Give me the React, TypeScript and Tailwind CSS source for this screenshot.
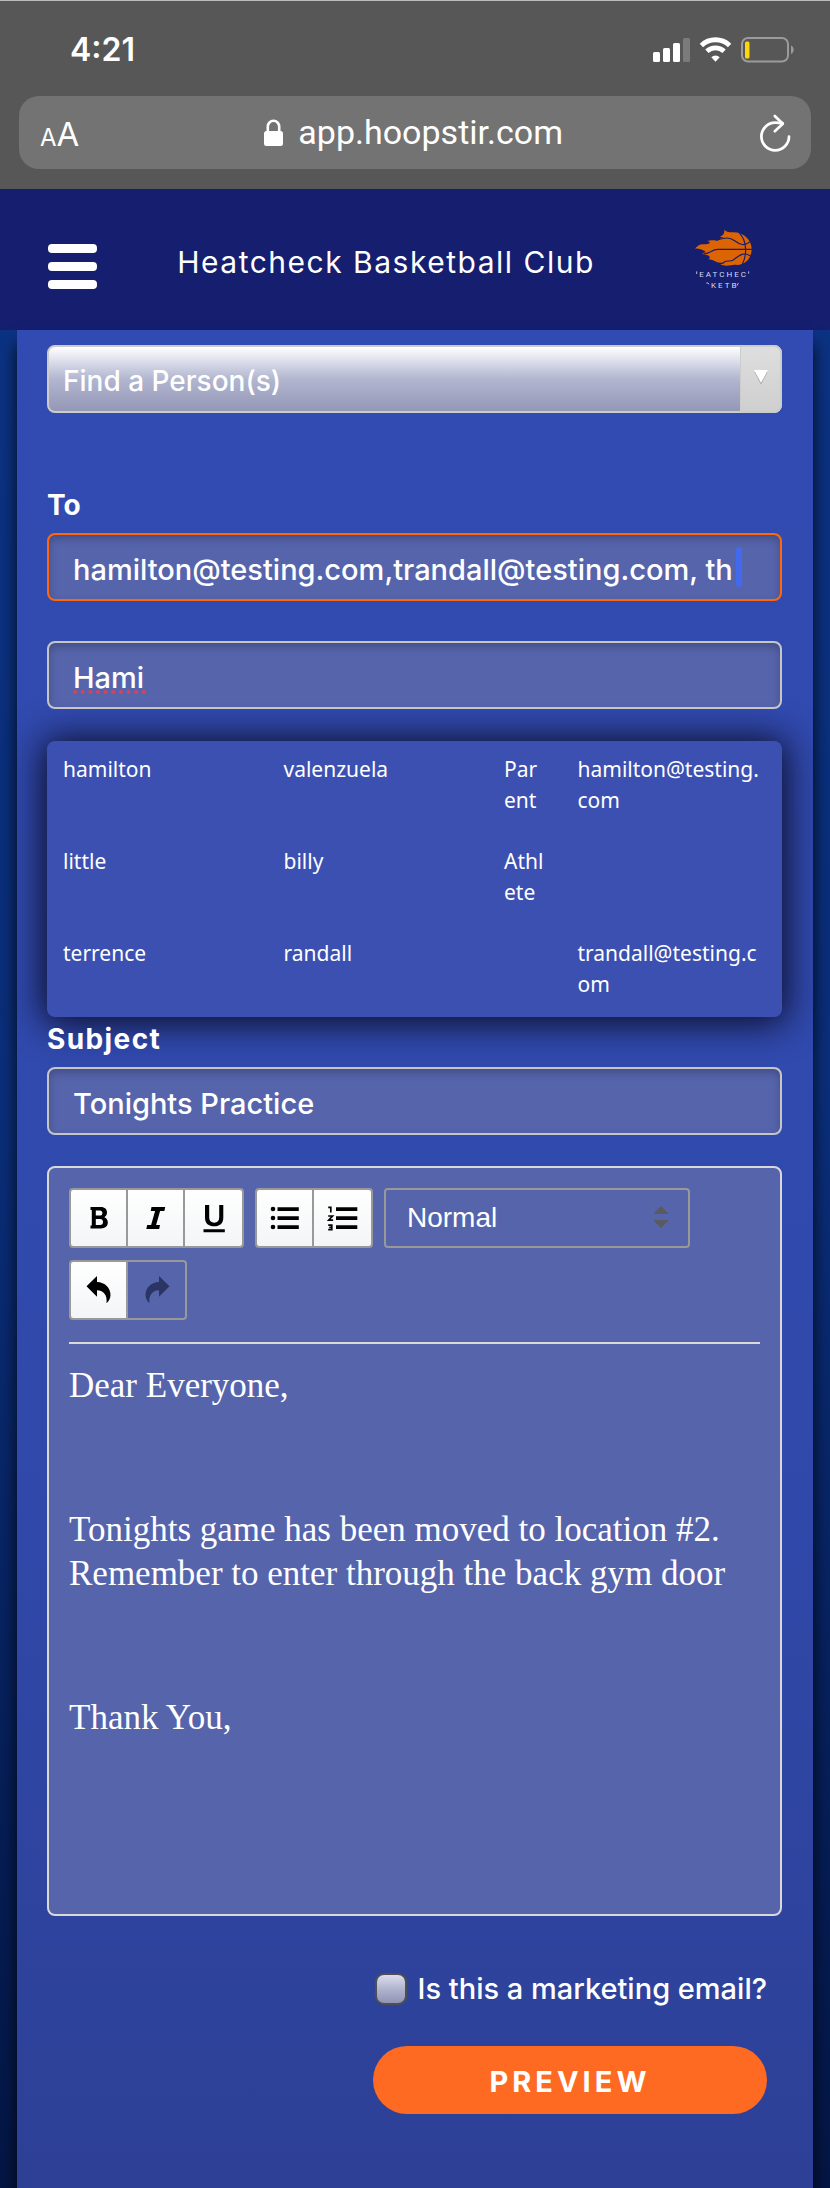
import React from "react";

const people = [
  { first: "hamilton", last: "valenzuela", role: "Parent", email: "hamilton@testing.com" },
  { first: "little", last: "billy", role: "Athlete", email: "" },
  { first: "terrence", last: "randall", role: "", email: "trandall@testing.com" },
];

const fieldClass =
  "block h-[68px] w-full rounded-lg border-2 bg-[#5664ac] px-6 pt-1 text-[29px] font-medium text-white outline-none shadow-[inset_0_4px_8px_rgba(0,0,0,0.22)]";

function StatusIcons() {
  return (
    <svg width="142" height="26" viewBox="0 0 142 26" aria-hidden="true">
      <g fill="#fff">
        <rect x="0" y="15" width="7" height="10" rx="1.5" />
        <rect x="10" y="11" width="7" height="14" rx="1.5" />
        <rect x="20" y="6" width="7" height="19" rx="1.5" />
        <rect x="30" y="1" width="7" height="24" rx="1.5" fill="#7b7b7b" />
      </g>
      <g fill="none" stroke="#fff" strokeWidth="4.8">
        <path d="M48.4 8.400a20.400 20.400 0 0 1 28.200 0" />
        <path d="M53.900 14.300a12.600 12.600 0 0 1 17.200 0" />
      </g>
      <path d="M62.500 24.800 58.300 20.200a6.200 6.200 0 0 1 8.400 0z" fill="#fff" />
      <rect x="89" y="1" width="46" height="23.500" rx="6" fill="none" stroke="#9b9b9b" strokeWidth="2" />
      <rect x="92" y="4.500" width="4.500" height="17" rx="1.500" fill="#fdd60a" />
      <path d="M138 8.500c3.600 1.500 3.600 7 0 8.500z" fill="#9b9b9b" />
    </svg>
  );
}

function BrowserChrome() {
  return (
    <div className="border-t border-[#b9bdbd] bg-[#575757] px-[19px] pb-5 text-white">
      <div className="flex h-[95px] items-center justify-between pt-[3px] pr-4 pl-[51px]">
        <span className="text-[32px] font-semibold">4:21</span>
        <StatusIcons />
      </div>
      <div className="flex h-[73px] items-center justify-between rounded-[20px] bg-[#737373] pr-5 pl-[21px]">
        <button type="button" aria-label="Text size" className="flex items-baseline pt-1">
          <span className="text-[24px]">A</span>
          <span className="text-[33px]">A</span>
        </button>
        <div className="flex items-center gap-[15px]">
          <svg width="19" height="28" viewBox="0 0 19 28" aria-hidden="true">
            <rect x="0" y="12" width="19" height="15" rx="2.500" fill="#fff" />
            <path d="M3.800 13V7.500a5.700 5.700 0 0 1 11.400 0V13" fill="none" stroke="#fff" strokeWidth="2.600" />
          </svg>
          <span className="pr-3 font-['Roboto',sans-serif] text-[34px]">app.hoopstir.com</span>
        </div>
        <button type="button" aria-label="Reload">
          <svg width="31" height="38" viewBox="0 0 31 38" fill="none" stroke="#fff" strokeWidth="2.700" strokeLinecap="round" strokeLinejoin="round">
            <path d="M29 22.500A13.800 13.800 0 1 1 15.300 8.700l7.200.5" />
            <path d="M14.800 2l8 7.700-8 7.500" />
          </svg>
        </button>
      </div>
    </div>
  );
}

function ClubLogo() {
  return (
    <svg width="62" height="62" viewBox="61 57 186 186" role="img" aria-label="Heatcheck Basketball logo">
      <path
        d="M160 58c5 8 13 9 27 9 34 0 56 24 56 51 0 26-18 46-44 47-10-2-20 2-31 2-8 0-13-1-19-4 8-1 13-3 14-7-10 3-20 3-27-1-8-4-15-6-23-7 5-3 5-7 2-10-8-5-14-5-21-6 5-3 8-5 10-8-10-5-20-9-32-8 8-7 14-13 24-13 8 0 15 1 20-3 3-4-1-6-7-7 15-5 26 0 34-4 6-3 13-5 17-5-5-3-9-3-13-3 9-4 17-12 13-23z"
        fill="#dc6403"
      />
      <g fill="none" stroke="#161e70" strokeWidth="3.500" strokeLinecap="round">
        <path d="M100 130c16 3 22-12 42-12h101" />
        <path d="M137 91c24-7 37-12 55 1 16 12 30 18 46 3" />
        <path d="M241 139c-25-17-39 1-53 11-9 5-17 1-27 5" />
        <path d="M207 70c21 22 23 64 8 93" />
      </g>
      <g fill="#d9dcf0" fontFamily="Roboto, sans-serif" fontSize="24" letterSpacing="6">
        <text x="86" y="201">EATCHEC</text>
        <text x="121" y="235">KETB</text>
      </g>
      <path d="M78 184v8M234 184v7M107 219l5 0 3 4M203 219l-4 8" fill="none" stroke="#d9dcf0" strokeWidth="2.500" />
    </svg>
  );
}

function SiteHeader() {
  return (
    <header className="flex h-[141px] items-center justify-between bg-[#161e70] pr-[77px] pl-12 text-white">
      <button type="button" aria-label="Menu" className="mt-[14px] flex w-[49px] flex-col gap-[9px]">
        <span className="h-[9px] rounded-sm bg-white" />
        <span className="h-[9px] rounded-sm bg-white" />
        <span className="h-[9px] rounded-sm bg-white" />
      </button>
      <h1 className="mt-[6px] pr-4 text-[30px] tracking-wider">Heatcheck Basketball Club</h1>
      <ClubLogo />
    </header>
  );
}

function ToolButton({ label, disabled, children }: { label: string; disabled?: boolean; children: React.ReactNode }) {
  return (
    <button
      type="button"
      aria-label={label}
      disabled={disabled}
      className="flex h-14 w-[57px] items-center justify-center bg-linear-to-b from-white to-[#f3f5f7] text-black disabled:bg-none disabled:text-[#2b3563]"
    >
      <svg width="32" height="32" viewBox="0 0 32 32" fill="currentColor" aria-hidden="true">
        {children}
      </svg>
    </button>
  );
}

function ToolGroup({ children }: { children: React.ReactNode }) {
  return (
    <div className="flex divide-x-2 divide-[#999] overflow-hidden rounded border-2 border-[#999]">{children}</div>
  );
}

function Toolbar() {
  return (
    <div className="flex flex-wrap gap-x-[11px] gap-y-3 border-b-2 border-[#d9d9d9] pb-[22px]">
      <ToolGroup>
        <ToolButton label="Bold">
          <path fillRule="evenodd" d="M7.500 5h10.200c4.300 0 6.300 2.400 6.300 5.600 0 2.200-1 3.800-2.700 4.600 2.200.8 3.500 2.700 3.500 5.100 0 4-2.700 6.200-7 6.200H7.500v-3h1.300V8H7.500zm5.300 3.400v5.200h4c1.700 0 2.600-1 2.600-2.600s-.9-2.600-2.600-2.600zm0 8.500V23h4.300c1.900 0 2.900-1.100 2.900-3s-1-3.100-2.900-3.100z" />
        </ToolButton>
        <ToolButton label="Italic">
          <path d="M11.500 5h13.700l-.8 3.900h-4.300l-4 14h3.900L19.200 27H6.300l.9-4.100h3.900l4-14h-4.400z" />
        </ToolButton>
        <ToolButton label="Underline">
          <path d="M7 3h4.200v12.500c0 3.400 1.800 5.200 5 5.200s5-1.800 5-5.200V3h4.100v12.700c0 5.600-3.500 8.600-9.100 8.600S7 21.300 7 15.700zM5.500 27.300h21.300v3H5.500z" />
        </ToolButton>
      </ToolGroup>
      <ToolGroup>
        <ToolButton label="Bulleted list">
          <circle cx="4" cy="7" r="2.300" />
          <circle cx="4" cy="16" r="2.300" />
          <circle cx="4" cy="25" r="2.300" />
          <path d="M8.500 5.300h21.300v3.600H8.500zM8.500 14.300h21.300v3.600H8.500zM8.500 23.300h21.300v3.600H8.500z" />
        </ToolButton>
        <ToolButton label="Numbered list">
          <path d="M9 5.300h21.300v3.600H9zM9 14.300h21.300v3.600H9zM9 23.300h21.300v3.600H9z" />
          <path d="M1.200 5.400h2.600v5M1.200 14h4.300L1.700 18.200h4.400M1.200 23.200h3.600v4.500H1.200M2.200 25.400h2.600" fill="none" stroke="currentColor" strokeWidth="1.700" />
        </ToolButton>
      </ToolGroup>
      <div className="relative w-[306px]">
        <select
          aria-label="Paragraph style"
          className="h-[60px] w-full appearance-none rounded border-2 border-[#999] bg-transparent px-[21px] font-['Liberation_Sans',sans-serif] text-[28px] text-white"
        >
          <option>Normal</option>
        </select>
        <svg className="pointer-events-none absolute top-[18px] right-5" width="18" height="23" viewBox="0 0 18 23" fill="#5b5b5f" aria-hidden="true">
          <path d="M1 8 9 0l8 8zM1 14h16l-8 8z" />
        </svg>
      </div>
      <ToolGroup>
        <ToolButton label="Undo">
          <path d="M3.500 12.300 14 2v6c8 .3 13.500 5.800 13.500 12.800 0 3.300-1.500 6.300-4 8.500 1-7.500-2.500-13-9.500-13v6.500z" />
        </ToolButton>
        <ToolButton label="Redo" disabled>
          <path d="M28.500 12.300 18 2v6C10 8.300 4.500 13.800 4.500 20.800c0 3.300 1.500 6.300 4 8.500-1-7.500 2.500-13 9.500-13v6.500z" />
        </ToolButton>
      </ToolGroup>
    </div>
  );
}

export default function App() {
  return (
    <div className="flex min-h-screen flex-col bg-linear-to-b from-[#0c3486] via-[#0b2f7c] via-50% to-[#041645] font-['Inter',sans-serif]">
      <BrowserChrome />
      <SiteHeader />
      <main className="mx-[17px] flex-1 bg-linear-to-b from-[#324bb2] via-[#3049ab] via-60% to-[#2d4096] pt-[15px] pr-[31px] pl-[30px] text-white shadow-[0_14px_16px_rgba(0,0,0,0.8)]">
        <form onSubmit={(e) => e.preventDefault()}>
          <div className="relative">
            <select
              aria-label="Find a Person(s)"
              className="block h-[68px] w-full appearance-none rounded-lg border-2 border-[#ccc] bg-linear-to-b from-white via-[#b2b6d0] via-50% to-[#9497b6] pt-1 pr-12 pl-[14px] text-[28px] font-medium text-white"
            >
              <option>Find a Person(s)</option>
            </select>
            <span className="pointer-events-none absolute inset-y-0 right-0 flex w-[42px] justify-center rounded-r-lg border-2 border-l border-[#ccc] bg-linear-to-b from-[#dedede] to-[#cfcfcf] pt-[23px]">
              <svg width="16" height="15" viewBox="0 0 16 15" aria-hidden="true">
                <path d="M1.500 2h13L8 14.500z" fill="#999" />
                <path d="M1 0h14L8 13z" fill="#fff" />
              </svg>
            </span>
          </div>

          <label htmlFor="to" className="mt-[74px] block text-[28px] leading-9 font-bold">
            To
          </label>
          <div className="relative mt-[10px]">
            <input id="to" type="text" defaultValue="hamilton@testing.com,trandall@testing.com, th" className={`${fieldClass} border-[#ff660d]`} />
            <span className="absolute top-[14px] right-10 h-10 w-[6px] rounded-full bg-[#436aee]" />
          </div>

          <div className="relative mt-10">
            <input aria-label="Search people" type="text" spellCheck={false} defaultValue="Hami" className={`${fieldClass} border-[#c6c6c6]`} />
            <span className="absolute top-[49px] left-[26px] w-[73px] border-b-4 border-dotted border-[#d9435a]" />
          </div>

          <table className="mt-8 w-full table-fixed rounded-lg bg-[#3c50b1] font-['Noto_Sans',sans-serif] text-[21px] leading-[31px] shadow-[0_2px_36px_4px_rgba(8,8,30,0.95)]">
            <colgroup>
              <col className="w-[30%]" />
              <col className="w-[30%]" />
              <col className="w-[10%]" />
              <col className="w-[30%]" />
            </colgroup>
            <tbody>
              {people.map((p) => (
                <tr key={p.first} className="h-[92px] align-top">
                  <td className="px-4 pt-[13px]">{p.first}</td>
                  <td className="px-4 pt-[13px]">{p.last}</td>
                  <td className="px-4 pt-[13px] break-all">{p.role}</td>
                  <td className="px-4 pt-[13px] break-all">{p.email}</td>
                </tr>
              ))}
            </tbody>
          </table>

          <label htmlFor="subject" className="mt-1 block text-[28px] leading-9 font-bold tracking-wider">
            Subject
          </label>
          <input id="subject" type="text" defaultValue="Tonights Practice" className={`${fieldClass} mt-[10px] border-[#c6c6c6]`} />

          <div className="mt-[31px] rounded-lg border-2 border-[#d9d9d9] bg-[#5664ac] px-5 pt-5">
            <Toolbar />
            <div
              role="textbox"
              aria-label="Message"
              aria-multiline="true"
              contentEditable
              suppressContentEditableWarning
              className="min-h-[570px] pt-5 font-['Liberation_Serif',serif] text-[35px] leading-[44px] outline-none"
            >
              <p>Dear Everyone,</p>
              <p className="mt-[100px]">Tonights game has been moved to location #2. Remember to enter through the back gym door</p>
              <p className="mt-[100px]">Thank You,</p>
            </div>
          </div>

          <div className="mt-[55px] mr-[15px] flex flex-col items-end pb-[72px]">
            <label className="flex items-center gap-[11px] text-[29px] leading-9 font-medium">
              <input
                type="checkbox"
                className="size-8 appearance-none rounded-[9px] border-2 border-[#505050] bg-linear-to-b from-[#dcdded] via-[#b0b4cf] via-50% to-[#9194b4]"
              />
              Is this a marketing email?
            </label>
            <button type="submit" className="mt-[39px] h-[68px] w-[394px] rounded-full bg-[#ff6a22] pt-1 text-[29px] font-bold tracking-[4px]">
              PREVIEW
            </button>
          </div>
        </form>
      </main>
    </div>
  );
}
